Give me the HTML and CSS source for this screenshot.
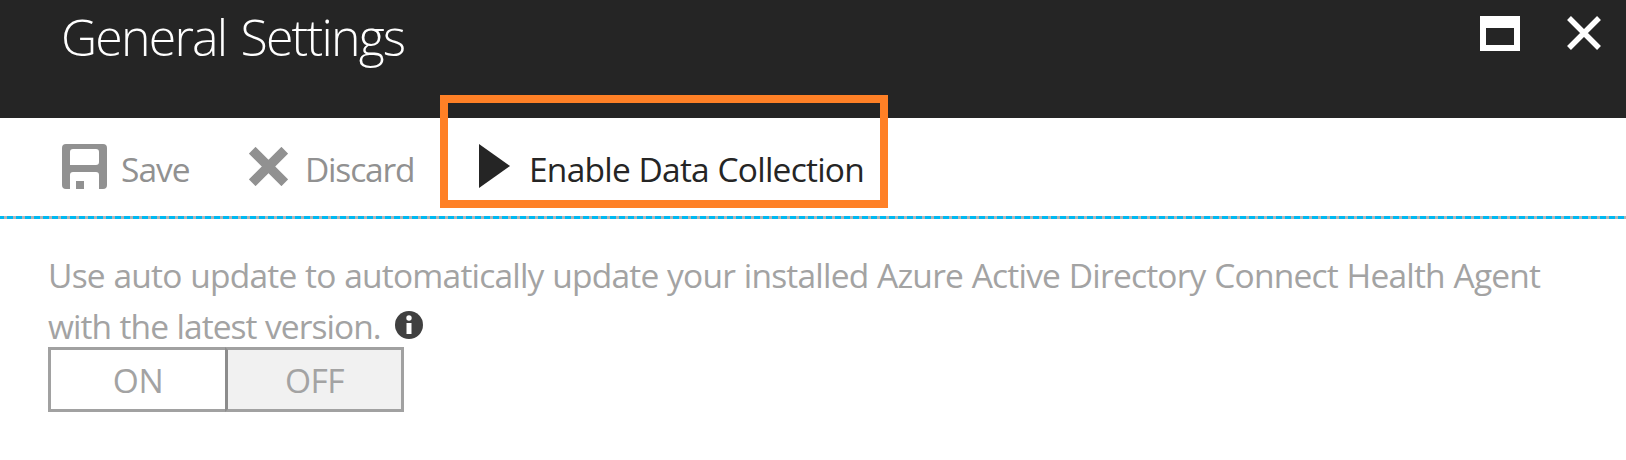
FILE: index.html
```html
<!DOCTYPE html>
<html lang="en">
<head>
<meta charset="utf-8">
<title>General Settings</title>
<link rel="stylesheet" href="styles.css">
</head>
<body>
<header class="header">
  <h1 class="title">General Settings</h1>
  <div class="window-actions">
    <svg width="40" height="35" viewBox="0 0 40 35"><path fill="#fff" fill-rule="evenodd" d="M0 0h40v35H0zM6 12v17h28V12z"/></svg>
    <svg width="34" height="34" viewBox="0 0 34 34"><path d="M2 2l30 30M32 2L2 32" stroke="#fff" stroke-width="5.5"/></svg>
  </div>
</header>
<nav class="toolbar">
  <div class="command save">
    <svg width="45" height="45" viewBox="0 0 45 45"><path fill="#919191" fill-rule="evenodd" d="M4 0h37q4 0 4 4v37q0 4-4 4h-4V31q0-3-3-3H11q-3 0-3 3v14H4q-4 0-4-4V4q0-4 4-4zM11 5q-3 0-3 3v13h26q3 0 3-3V8q0-3-3-3zM14 37h8v8h-8z"/></svg>
    <span class="label">Save</span>
  </div>
  <div class="command discard">
    <svg width="39" height="39" viewBox="0 0 39 39"><path d="M3.2 3.2l32.6 32.6M35.8 3.2L3.2 35.8" stroke="#919191" stroke-width="9.5"/></svg>
    <span class="label">Discard</span>
  </div>
  <div class="command enable">
    <svg width="31" height="44" viewBox="0 0 31 44"><path fill="#252525" d="M0 0l31 22L0 44z"/></svg>
    <span class="label">Enable Data Collection</span>
  </div>
</nav>
<div class="highlight"></div>
<main class="content">
  <p class="description"><span class="line-one">Use auto update to automatically update your installed Azure Active Directory Connect Health Agent</span><br><span class="line-two">with the latest version.</span><svg class="info" width="28" height="28" viewBox="0 0 28 28"><circle cx="14" cy="14" r="14" fill="#404040"/><circle cx="14" cy="7" r="2.7" fill="#fff"/><path fill="#fff" d="M11.5 12h5v11h-5z"/></svg></p>
  <div class="toggle">
    <div class="option on"><span>ON</span></div>
    <div class="option off"><span>OFF</span></div>
  </div>
</main>
</body>
</html>
```
FILE: styles.css
```css
* { box-sizing: border-box; }
body {
  margin: 0;
  height: 460px;
  overflow: hidden;
  background: #fff;
  font-family: "Open Sans", "Noto Sans", sans-serif;
  font-size: 33.5px;
}
svg { display: block; flex: none; }
.header {
  display: flex;
  justify-content: space-between;
  height: 118px;
  padding: 0 25px 0 61px;
  background: #252525;
  color: #fff;
}
.title {
  margin: 0;
  font-size: 50px;
  font-weight: 300;
  letter-spacing: -1.8px;
  word-spacing: 3px;
  line-height: 74px;
  white-space: nowrap;
}
.window-actions {
  display: flex;
  gap: 47px;
  padding-top: 16px;
}
.toolbar {
  display: flex;
  height: 101px;
  padding: 26px 0 0 62px;
  background: repeating-linear-gradient(90deg, #00b9f2 0 6px, #b3b3b3 6px 9px) -2px 98px / calc(100% + 2px) 3px no-repeat;
  color: #919191;
  white-space: nowrap;
}
.command { display: flex; }
.label { line-height: 50px; letter-spacing: -0.7px; }
.save { width: 187px; gap: 14px; }
.save .label { letter-spacing: -0.95px; }
.discard { width: 230px; gap: 17px; }
.discard .label { letter-spacing: -1.2px; }
.discard svg { margin-top: 3px; }
.enable { gap: 19px; color: #252525; }
.enable .label { letter-spacing: -0.75px; word-spacing: 0.5px; }
.highlight {
  position: absolute;
  left: 440px;
  top: 95px;
  width: 448px;
  height: 113px;
  border: 8px solid #ff8026;
}
.content { padding: 31px 48px 0; color: #a3a3a3; }
.description {
  margin: 0;
  height: 97px;
  line-height: 51px;
  white-space: nowrap;
}
.line-one { letter-spacing: -0.79px; word-spacing: 0.75px; }
.line-two { letter-spacing: -0.95px; word-spacing: 0.75px; }
.info { display: inline-block; margin-left: 14px; vertical-align: 0; }
.toggle { display: flex; width: 356px; height: 65px; }
.option {
  display: flex;
  justify-content: center;
  width: 178px;
  border: 3px solid #a1a1a1;
  line-height: 60px;
  letter-spacing: -0.5px;
}
.on { border-right: 0; width: 177px; }
.off { width: 179px; border-left-color: #8c8c8c; background: #f1f1f1; }
```
